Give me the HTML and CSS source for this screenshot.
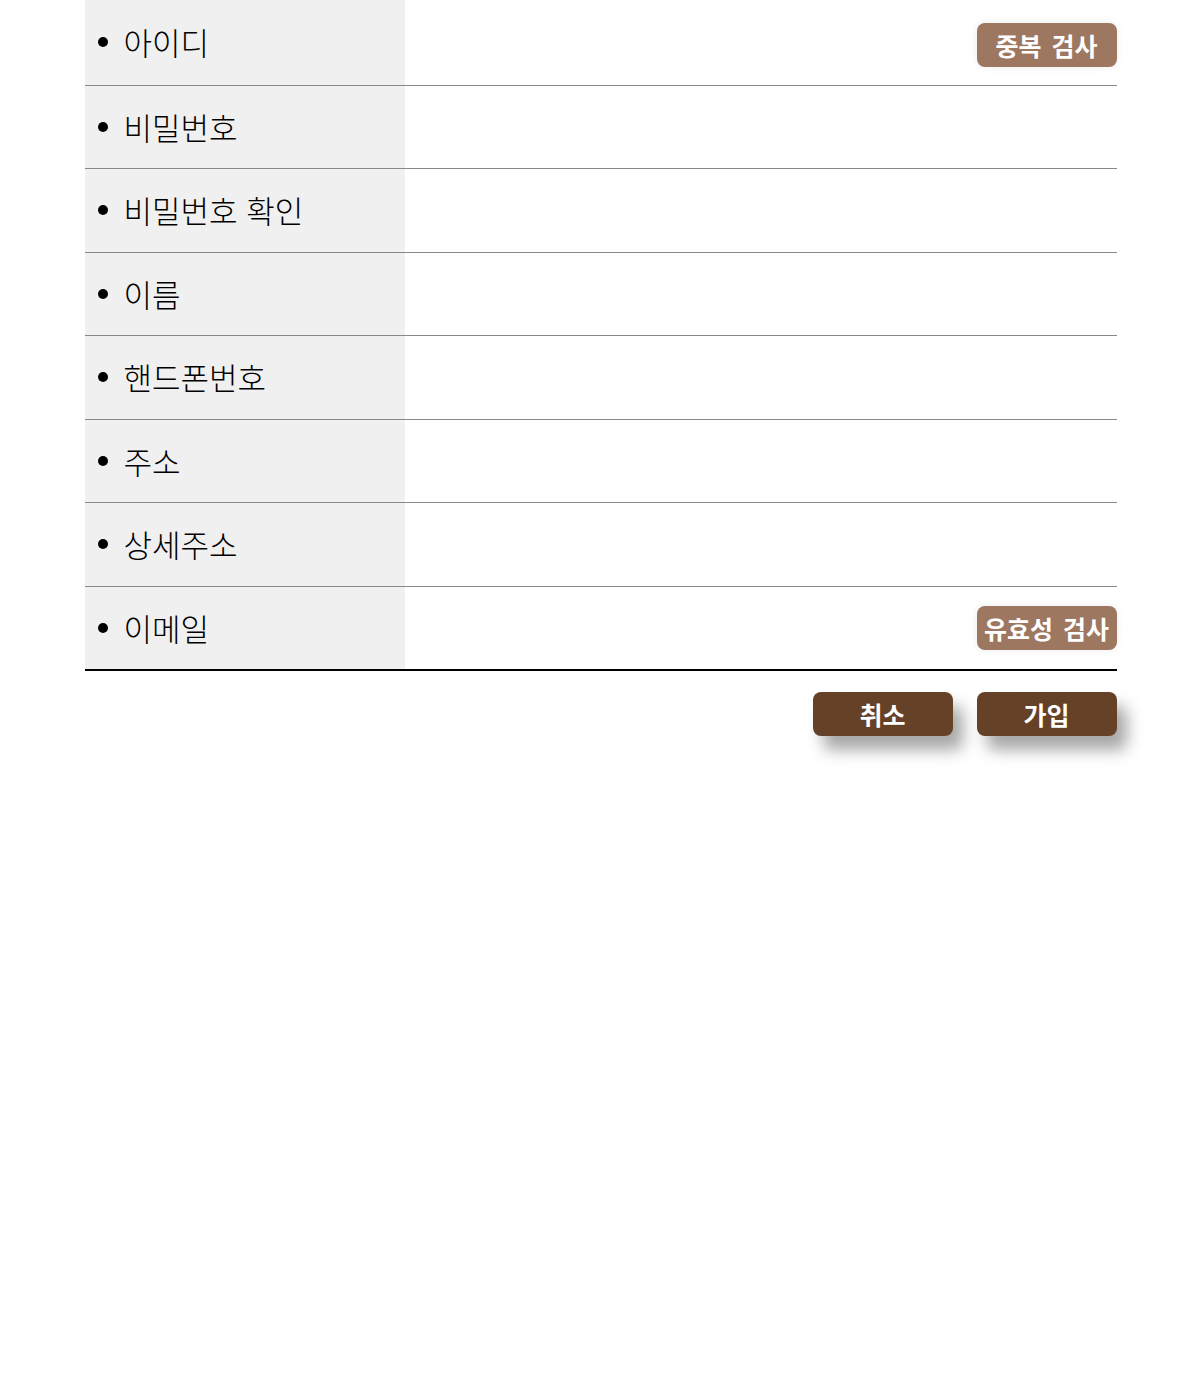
FILE: index.html
```html
<!DOCTYPE html>
<html lang="ko">
<head>
<meta charset="utf-8">
<title>회원가입</title>
<link rel="stylesheet" href="styles.css">
</head>
<body>
<div class="wrap">
  <table class="join">
    <tr class="first"><th><span class="label">아이디</span></th><td><button class="btn-light">중복 검사</button></td></tr>
    <tr><th><span class="label">비밀번호</span></th><td></td></tr>
    <tr><th><span class="label">비밀번호 확인</span></th><td></td></tr>
    <tr><th><span class="label">이름</span></th><td></td></tr>
    <tr><th><span class="label">핸드폰번호</span></th><td></td></tr>
    <tr><th><span class="label">주소</span></th><td></td></tr>
    <tr><th><span class="label">상세주소</span></th><td></td></tr>
    <tr class="last"><th><span class="label">이메일</span></th><td><button class="btn-light">유효성 검사</button></td></tr>
  </table>
  <div class="actions">
    <button class="btn-dark">취소</button>
    <button class="btn-dark">가입</button>
  </div>
</div>
</body>
</html>
```
FILE: styles.css
```css
html, body {
  margin: 0;
  padding: 0;
  background: #fff;
}
body {
  font-family: "Noto Sans CJK KR", "Noto Sans", sans-serif;
  color: #000;
  padding-bottom: 80px;
}
.wrap {
  width: 1032px;
  margin: 0 auto;
  padding-left: 1px;
}
.join {
  width: 100%;
  border-collapse: collapse;
}
.join tr {
  height: 83.5px;
  border-bottom: 1px solid #888;
}
.join tr.first {
  height: 85px;
}
.join tr.last {
  border-bottom: 2px solid #000;
}
.join th {
  width: 320px;
  background: #f0f0f0;
  text-align: left;
  font-weight: 300;
  padding: 0;
  vertical-align: middle;
}
.label {
  display: flex;
  align-items: center;
  gap: 16px;
  padding-left: 13px;
  font-size: 31px;
  font-weight: 300;
  line-height: 40px;
}
.label::before {
  content: "";
  width: 10px;
  height: 10px;
  border-radius: 50%;
  background: #000;
  flex: none;
}
.join td {
  text-align: right;
  padding: 0;
  vertical-align: middle;
}
.btn-light, .btn-dark {
  width: 140px;
  height: 44px;
  border: none;
  border-radius: 8px;
  color: #fff;
  font-family: "Noto Sans CJK KR", sans-serif;
  font-weight: 700;
  font-size: 25px;
  padding: 0;
  line-height: 44px;
}
.btn-light {
  background: #9e7760;
  box-shadow: 0 0 8px rgba(0,0,0,0.08);
  word-spacing: 3px;
}
.first .btn-light {
  margin-top: 5px;
}
.btn-dark {
  background: #654128;
  box-shadow: 10px 14px 16px rgba(0,0,0,0.35);
}
.actions {
  display: flex;
  justify-content: flex-end;
  gap: 24px;
  margin-top: 21px;
}
```
